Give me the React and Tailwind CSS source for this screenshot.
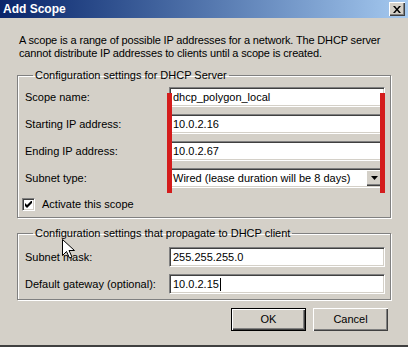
import React from "react";

const sunken =
  "border-t border-l border-t-[#808080] border-l-[#808080] border-b border-r border-b-white border-r-white shadow-[inset_1px_1px_0_#404040,inset_-1px_-1px_0_#d4d0c8]";

const raised =
  "shadow-[inset_1px_1px_0_white,inset_-1px_-1px_0_#404040,inset_-2px_-2px_0_#808080]";

function Field({ label, value, caret }) {
  return (
    <div className="flex items-center h-[20px]">
      <div className="w-[144px] shrink-0">{label}</div>
      <div className={`flex-1 h-[20px] bg-white flex items-center pl-[3px] ${sunken}`}>
        <span>{value}</span>
        {caret && <span className="w-px h-[13px] bg-black ml-px"></span>}
      </div>
    </div>
  );
}

function Button({ children, primary }) {
  return (
    <button
      className={`w-[75px] h-[23px] bg-[#d4d0c8] flex items-center justify-center ${raised} ${
        primary ? "border border-black" : ""
      }`}
    >
      {children}
    </button>
  );
}

export default function App() {
  return (
    <div
      className="relative w-[408px] h-[347px] bg-[#d4d0c8] text-black text-[11px] leading-[13px] overflow-hidden border-b-2 border-b-[#404040] whitespace-nowrap"
      style={{ fontFamily: '"Liberation Sans", Arial, sans-serif' }}
    >
      {/* Title bar */}
      <div className="h-[18px] flex items-center pl-[3px] pr-[3px] bg-gradient-to-r from-[#0a246a] to-[#a6caf0]">
        <div className="text-white font-bold text-[12px] flex-1">Add Scope</div>
        <div className={`w-[16px] h-[14px] bg-[#d4d0c8] flex items-center justify-center ${raised}`}>
          <svg width="8" height="7" viewBox="0 0 8 7">
            <path d="M0 0h2l2 2.5L6 0h2L5 3.5 8 7H6L4 4.5 2 7H0l3-3.5z" fill="black" />
          </svg>
        </div>
      </div>

      <div className="pt-[16px] pl-[17px] pr-[17px]">
        <p className="pl-[2px] tracking-[-0.15px]">
          A scope is a range of possible IP addresses for a network. The DHCP server
          <br />
          cannot distribute IP addresses to clients until a scope is created.
        </p>

        {/* Group 1 */}
        <fieldset className="relative mt-[9px] border border-[#808080] shadow-[inset_1px_1px_0_white,1px_1px_0_white] pl-[7px] pr-[5px] pb-[6px]">
          <legend className="ml-[8px] px-[2px]">Configuration settings for DHCP Server</legend>
          <div className="pt-[5px] flex flex-col gap-[7px]">
            <Field label="Scope name:" value="dhcp_polygon_local" />
            <Field label="Starting IP address:" value="10.0.2.16" />
            <Field label="Ending IP address:" value="10.0.2.67" />
            <div className="flex items-center h-[20px]">
              <div className="w-[144px] shrink-0">Subnet type:</div>
              <div className={`flex-1 h-[20px] bg-white flex items-center pl-[3px] pr-[2px] ${sunken}`}>
                <span className="flex-1">Wired (lease duration will be 8 days)</span>
                <div className={`w-[16px] h-[16px] bg-[#d4d0c8] flex items-center justify-center ${raised}`}>
                  <svg width="7" height="4" viewBox="0 0 7 4">
                    <path d="M0 0h7L3.5 4z" fill="black" />
                  </svg>
                </div>
              </div>
            </div>
          </div>
          <label className="flex items-center mt-[10px] -ml-[3px] h-[13px]">
            <span className={`w-[13px] h-[13px] bg-white flex items-center justify-center ${sunken}`}>
              <svg width="7" height="7" viewBox="0 0 7 7">
                <path d="M0 2v3l2 2 5-5V-1L2 4z" fill="black" />
              </svg>
            </span>
            <span className="ml-[7px]">Activate this scope</span>
          </label>
          {/* red annotation bars */}
          <div className="absolute left-[149px] top-[11px] w-[5px] h-[100px] bg-[#d41c1c]"></div>
          <div className="absolute left-[362px] top-[11px] w-[5px] h-[100px] bg-[#d41c1c]"></div>
        </fieldset>

        {/* Group 2 */}
        <fieldset className="mt-[9px] border border-[#808080] shadow-[inset_1px_1px_0_white,1px_1px_0_white] pl-[7px] pr-[5px] pb-[5px]">
          <legend className="ml-[8px] px-[2px]">
            Configuration settings that propagate to DHCP client
          </legend>
          <div className="pt-[7px] flex flex-col gap-[7px]">
            <Field label="Subnet mask:" value="255.255.255.0" />
            <Field label="Default gateway (optional):" value="10.0.2.15" caret />
          </div>
        </fieldset>

        <div className="flex justify-end gap-[7px] mt-[8px] pr-[3px]">
          <Button primary>OK</Button>
          <Button>Cancel</Button>
        </div>
      </div>

      {/* mouse cursor */}
      <svg className="absolute left-[62px] top-[239px]" width="13" height="20" viewBox="0 0 13 20">
        <path
          d="M0.5 0.5v16l4-4 3 6.5 2.5-1-3-6.5h5.5z"
          fill="white"
          stroke="black"
          strokeWidth="1"
        />
      </svg>
    </div>
  );
}
